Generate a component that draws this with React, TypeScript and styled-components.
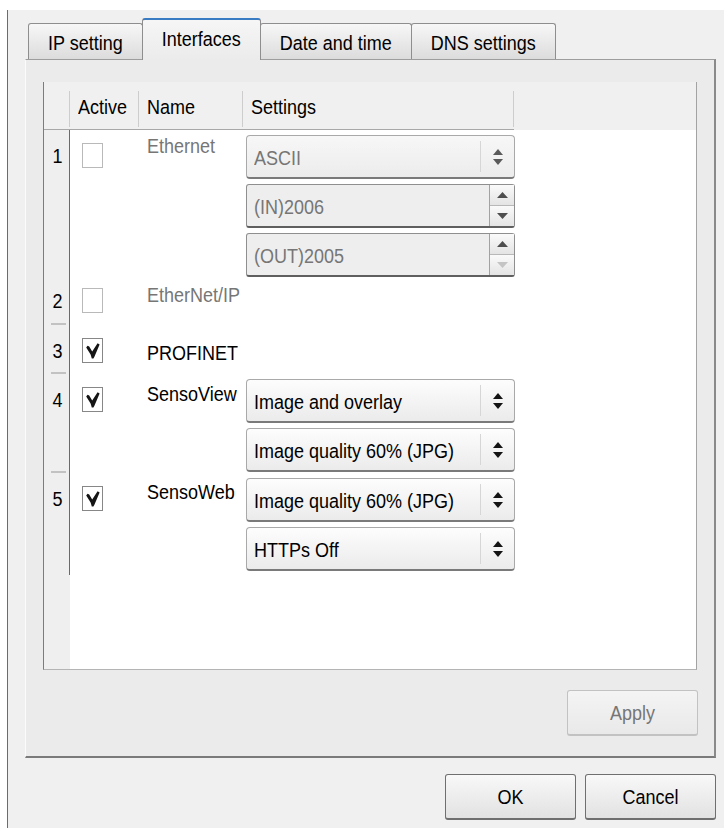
import React from "react";
import styled, { createGlobalStyle } from "styled-components";

const GlobalStyle = createGlobalStyle`
  html, body { margin: 0; padding: 0; background: #ffffff; }
  body {
    font-family: "Liberation Sans", Arial, sans-serif;
    font-size: 18px;
    color: #000;
  }
  * { box-sizing: border-box; }
`;

/* ---------- shared text ---------- */

const Label = styled.span<{ $muted?: boolean }>`
  display: inline-block;
  line-height: 22px;
  white-space: nowrap;
  transform: scaleY(1.15);
  color: ${(p) => (p.$muted ? "#767676" : "#000")};
`;

/* ---------- window / tabs ---------- */

const Window = styled.div`
  margin: 10px 0 0 7px;
  height: 818px;
  border-left: 1px solid #6c6c6c;
  background: #f0f0f0;
  padding-top: 8px;
  display: flex;
  flex-direction: column;
`;

const TabBar = styled.div`
  display: flex;
  align-items: flex-end;
  height: 41px;
  padding-left: 20px;
`;

const Tab = styled.div<{ $active?: boolean }>`
  position: relative;
  z-index: ${(p) => (p.$active ? 1 : 0)};
  height: ${(p) => (p.$active ? 42 : 36)}px;
  margin-bottom: ${(p) => (p.$active ? -1 : 0)}px;
  margin-left: -1px;
  padding: ${(p) => (p.$active ? "0 19px 3px" : "2px 19px 0")};
  display: flex;
  align-items: center;
  border: 1px solid #8e8e8e;
  border-bottom: none;
  border-top: ${(p) => (p.$active ? "2px solid #3a7cc4" : "1px solid #8e8e8e")};
  border-radius: 3px 3px 0 0;
  background: ${(p) =>
    p.$active
      ? "linear-gradient(#f6f6f6, #ebebeb)"
      : "linear-gradient(#f7f7f7, #dcdcdc)"};
  &:first-child { margin-left: 0; }
`;

const Pane = styled.div`
  margin-left: 17px;
  width: 691px;
  height: 699px;
  background: #ebebeb;
  border-top: 1px solid #9d9d9d;
  border-left: 1px solid #fbfbfb;
  border-right: 2px solid #8a8a8a;
  border-bottom: 2px solid #7a7a7a;
  padding: 22px 17px 0 17px;
  display: flex;
  flex-direction: column;
`;

/* ---------- table ---------- */

const COLS = "26px 69px 104px 271px 1fr";

const Table = styled.div`
  height: 588px;
  background: #ffffff;
  border-left: 1px solid #7c7c7c;
  border-right: 1px solid #a3a3a3;
  border-bottom: 1px solid #b4b4b4;
  display: flex;
  flex-direction: column;
`;

const HeaderRow = styled.div`
  display: grid;
  grid-template-columns: ${COLS};
  height: 48px;
  background: #f0f0f0;
`;

const HeaderCell = styled.div<{ $open?: boolean }>`
  display: flex;
  padding: 9px 0 2px;
  border-bottom: ${(p) => (p.$open ? "none" : "1px solid #a8a8a8")};
`;

const HeaderInner = styled.div<{ $open?: boolean }>`
  flex: 1;
  display: flex;
  align-items: center;
  padding: 0 0 4px 8px;
  border-right: ${(p) => (p.$open ? "none" : "1px solid #cdcdcd")};
`;

const Row = styled.div<{ $h: number }>`
  display: grid;
  grid-template-columns: ${COLS};
  height: ${(p) => p.$h}px;
`;

const RowHead = styled.div`
  background: #efefef;
  border-right: 1px solid #6a6a6a;
  display: flex;
  flex-direction: column;
  align-items: center;
`;

const RowNumber = styled.div`
  padding: 15px 0 0 2px;
`;

const RowDivider = styled.div`
  margin: auto 0 0 4px;
  width: 15px;
  height: 2px;
  background: #c2c2c2;
`;

const ActiveCell = styled.div`
  padding: 13px 0 0 12px;
`;

const CheckBox = styled.div<{ $disabled?: boolean }>`
  width: 21px;
  height: 25px;
  background: #ffffff;
  border: 1px solid ${(p) => (p.$disabled ? "#b9b9b9" : "#878787")};
  display: flex;
  align-items: center;
  justify-content: center;
`;

const NameCell = styled.div<{ $top: number }>`
  padding: ${(p) => p.$top}px 0 0 8px;
`;

const SettingsCell = styled.div`
  padding: 5px 0 0 3px;
  display: flex;
  flex-direction: column;
  gap: 5px;
`;

const Filler = styled.div`
  flex: 1;
  display: grid;
  grid-template-columns: 26px 1fr;
`;

const FillerHead = styled.div`
  background: #efefef;
`;

/* ---------- combo / spin ---------- */

const Combo = styled.div<{ $disabled?: boolean }>`
  width: 269px;
  height: 44px;
  display: flex;
  align-items: center;
  border: 1px solid #a9a9a9;
  border-bottom: 2px solid #7a7a7a;
  border-radius: 4px;
  background: ${(p) =>
    p.$disabled
      ? "linear-gradient(#f7f7f7, #ececec)"
      : "linear-gradient(#fdfdfd, #ebebeb)"};
`;

const FieldText = styled.div`
  flex: 1;
  padding: 2px 0 0 7px;
`;

const DropButton = styled.div`
  width: 34px;
  align-self: stretch;
  margin: 5px 0;
  border-left: 1px solid #d6d6d6;
  display: flex;
  align-items: center;
  justify-content: center;
`;

const Spin = styled.div`
  width: 269px;
  height: 44px;
  display: flex;
  align-items: center;
  border: 1px solid #8f8f8f;
  border-bottom: 2px solid #5f5f5f;
  border-radius: 3px;
  background: #eeeeee;
`;

const SpinButtons = styled.div`
  width: 25px;
  align-self: stretch;
  display: flex;
  flex-direction: column;
  border-left: 1px solid #a2a2a2;
`;

const SpinButton = styled.div`
  flex: 1;
  display: flex;
  align-items: center;
  justify-content: center;
  background: linear-gradient(#fafafa, #e4e4e4);
  border-bottom: 1px solid #b8b8b8;
  &:last-child { border-bottom: none; }
`;

/* ---------- buttons ---------- */

const ApplyRow = styled.div`
  margin: 20px -1px 0 0;
  display: flex;
  justify-content: flex-end;
`;

const Footer = styled.div`
  margin-top: 16px;
  padding-right: 8px;
  display: flex;
  justify-content: flex-end;
  gap: 9px;
`;

const Button = styled.div<{ $disabled?: boolean }>`
  width: 131px;
  height: 46px;
  display: flex;
  align-items: center;
  justify-content: center;
  border: 1px solid ${(p) => (p.$disabled ? "#c2c2c2" : "#6f6f6f")};
  border-bottom-width: 2px;
  border-radius: 3px;
  background: ${(p) =>
    p.$disabled
      ? "linear-gradient(#f4f4f4, #e9e9e9)"
      : "linear-gradient(#f8f8f8, #e2e2e2)"};
`;

/* ---------- drawings ---------- */

const UpDownArrows = ({ color }: { color: string }) => (
  <svg width="10" height="16" viewBox="0 0 10 16">
    <path d="M0 6 L5 0 L10 6 Z" fill={color} />
    <path d="M0 10 L10 10 L5 16 Z" fill={color} />
  </svg>
);

const SpinArrow = ({ up, color }: { up?: boolean; color: string }) => (
  <svg width="11" height="6" viewBox="0 0 11 6">
    <path d={up ? "M0 6 L5.5 0 L11 6 Z" : "M0 0 L11 0 L5.5 6 Z"} fill={color} />
  </svg>
);

/* Qt-style check: thin hooked left stroke, heavy right stroke */
const CheckMark = () => (
  <svg width="19" height="23" viewBox="0 0 19 23">
    <path
      d="M3.2 8.4 L4.6 6.8 L6.2 7.6 L9.2 12.6 L14.6 4.2 L16.6 5.4 L11.4 17.8 L10.4 19.6 L8.8 19.6 L7.6 15.4 Z"
      fill="#141414"
    />
  </svg>
);

/* ---------- data ---------- */

type Setting =
  | { kind: "combo"; text: string; disabled?: boolean }
  | { kind: "spin"; text: string; downDisabled?: boolean };

type Iface = {
  name: string;
  active: boolean;
  disabled?: boolean;
  height: number;
  nameTop: number;
  settings: Setting[];
};

const interfaces: Iface[] = [
  {
    name: "Ethernet",
    active: false,
    disabled: true,
    height: 145,
    nameTop: 5,
    settings: [
      { kind: "combo", text: "ASCII", disabled: true },
      { kind: "spin", text: "(IN)2006" },
      { kind: "spin", text: "(OUT)2005", downDisabled: true },
    ],
  },
  { name: "EtherNet/IP", active: false, disabled: true, height: 50, nameTop: 9, settings: [] },
  { name: "PROFINET", active: true, height: 49, nameTop: 17, settings: [] },
  {
    name: "SensoView",
    active: true,
    height: 99,
    nameTop: 9,
    settings: [
      { kind: "combo", text: "Image and overlay" },
      { kind: "combo", text: "Image quality 60% (JPG)" },
    ],
  },
  {
    name: "SensoWeb",
    active: true,
    height: 102,
    nameTop: 8,
    settings: [
      { kind: "combo", text: "Image quality 60% (JPG)" },
      { kind: "combo", text: "HTTPs Off" },
    ],
  },
];

const tabs = ["IP setting", "Interfaces", "Date and time", "DNS settings"];

const SettingField = ({ s }: { s: Setting }) => {
  if (s.kind === "combo") {
    return (
      <Combo $disabled={s.disabled}>
        <FieldText>
          <Label $muted={s.disabled}>{s.text}</Label>
        </FieldText>
        <DropButton>
          <UpDownArrows color={s.disabled ? "#5a5a5a" : "#141414"} />
        </DropButton>
      </Combo>
    );
  }
  return (
    <Spin>
      <FieldText>
        <Label $muted>{s.text}</Label>
      </FieldText>
      <SpinButtons>
        <SpinButton>
          <SpinArrow up color="#4e4e4e" />
        </SpinButton>
        <SpinButton>
          <SpinArrow color={s.downDisabled ? "#c4c4c4" : "#4e4e4e"} />
        </SpinButton>
      </SpinButtons>
    </Spin>
  );
};

export default function App() {
  return (
    <>
      <GlobalStyle />
      <Window>
        <TabBar>
          {tabs.map((t) => (
            <Tab key={t} $active={t === "Interfaces"}>
              <Label>{t}</Label>
            </Tab>
          ))}
        </TabBar>
        <Pane>
          <Table>
            <HeaderRow>
              <HeaderCell>
                <HeaderInner />
              </HeaderCell>
              <HeaderCell>
                <HeaderInner>
                  <Label>Active</Label>
                </HeaderInner>
              </HeaderCell>
              <HeaderCell>
                <HeaderInner>
                  <Label>Name</Label>
                </HeaderInner>
              </HeaderCell>
              <HeaderCell>
                <HeaderInner>
                  <Label>Settings</Label>
                </HeaderInner>
              </HeaderCell>
              <HeaderCell $open>
                <HeaderInner $open />
              </HeaderCell>
            </HeaderRow>
            {interfaces.map((it, i) => (
              <Row key={it.name} $h={it.height}>
                <RowHead>
                  <RowNumber>
                    <Label>{i + 1}</Label>
                  </RowNumber>
                  {i < interfaces.length - 1 && <RowDivider />}
                </RowHead>
                <ActiveCell>
                  <CheckBox $disabled={it.disabled}>
                    {it.active && <CheckMark />}
                  </CheckBox>
                </ActiveCell>
                <NameCell $top={it.nameTop}>
                  <Label $muted={it.disabled}>{it.name}</Label>
                </NameCell>
                <SettingsCell>
                  {it.settings.map((s, j) => (
                    <SettingField key={j} s={s} />
                  ))}
                </SettingsCell>
                <div />
              </Row>
            ))}
            <Filler>
              <FillerHead />
              <div />
            </Filler>
          </Table>
          <ApplyRow>
            <Button $disabled>
              <Label $muted>Apply</Label>
            </Button>
          </ApplyRow>
        </Pane>
        <Footer>
          <Button>
            <Label>OK</Label>
          </Button>
          <Button>
            <Label>Cancel</Label>
          </Button>
        </Footer>
      </Window>
    </>
  );
}
